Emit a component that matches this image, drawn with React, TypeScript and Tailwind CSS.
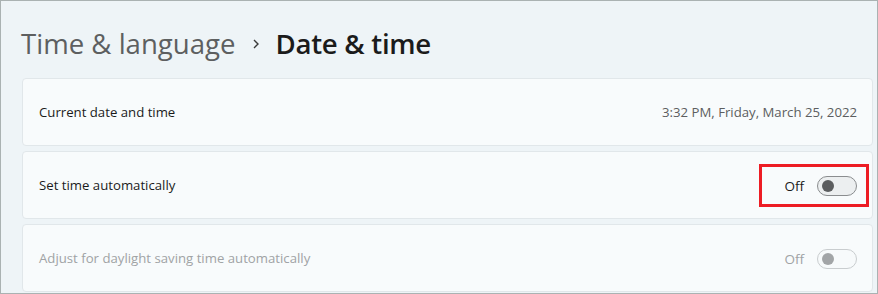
import React from "react";

function Toggle({ disabled = false }: { disabled?: boolean }) {
  return (
    <div
      className={`flex h-[20px] w-[40px] items-center rounded-full border pl-[4px] ${
        disabled ? "border-[#c9cdcf] bg-[#f7fafb]" : "border-[#8a8d8f] bg-[#eceff0]"
      }`}
    >
      <div
        className={`h-[12px] w-[12px] rounded-full ${
          disabled ? "bg-[#a2a5a7]" : "bg-[#5b5d5f]"
        }`}
      />
    </div>
  );
}

function SettingRow({
  label,
  disabled = false,
  children,
}: {
  label: string;
  disabled?: boolean;
  children: React.ReactNode;
}) {
  return (
    <div className="flex h-[68px] items-center justify-between rounded-[4px] border border-[#e1e7ea] bg-[#f8fbfc] pl-[16px] pr-[15px] pt-[2px]">
      <span className={`text-[13.2px] ${disabled ? "text-[#a0a3a5]" : "text-[#1b1b1b]"}`}>
        {label}
      </span>
      {children}
    </div>
  );
}

export default function App() {
  return (
    <div
      className="flex h-[294px] w-[878px] flex-col overflow-hidden border border-[#aab2b2] bg-[#eef4f7]"
      style={{ fontFamily: '"Open Sans", "Noto Sans", sans-serif' }}
    >
      {/* Breadcrumb header */}
      <div className="flex h-[77px] items-center gap-[15px] pl-[20px] pt-[9px]">
        <span className="text-[27.6px] text-[#5d5f60]">Time &amp; language</span>
        <svg width="10" height="12" viewBox="0 0 10 12">
          <path d="M3 2 L7 6 L3 10" fill="none" stroke="#3a3a3a" strokeWidth="1.4" />
        </svg>
        <span className="text-[27.6px] font-semibold tracking-[-0.3px] text-[#1b1b1b]">
          Date &amp; time
        </span>
      </div>

      {/* Settings list */}
      <div className="flex flex-col gap-[5px] pl-[21px] pr-[4px]">
        <SettingRow label="Current date and time">
          <span className="text-[13.2px] text-[#5c5e60]">3:32 PM, Friday, March 25, 2022</span>
        </SettingRow>

        <SettingRow label="Set time automatically">
          <div className="relative flex items-center gap-[13px]">
            <span className="text-[13.5px] text-[#1b1b1b]">Off</span>
            <Toggle />
            <div className="pointer-events-none absolute -bottom-[11px] -left-[25px] -right-[12px] -top-[12px] border-[3px] border-[#ed1c24]" />
          </div>
        </SettingRow>

        <SettingRow label="Adjust for daylight saving time automatically" disabled>
          <div className="flex items-center gap-[13px]">
            <span className="text-[13.5px] text-[#a0a3a5]">Off</span>
            <Toggle disabled />
          </div>
        </SettingRow>
      </div>
    </div>
  );
}
